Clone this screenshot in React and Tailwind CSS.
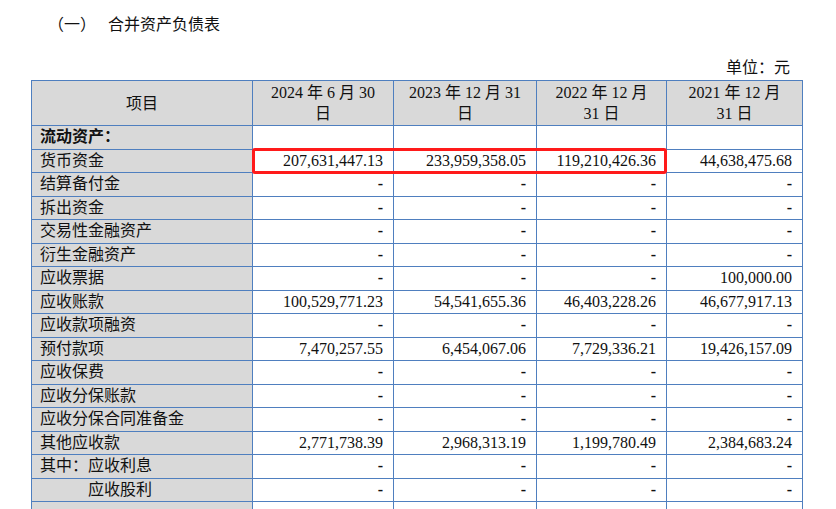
const rows = [
  ["流动资产：", "", "", "", "", true],
  ["货币资金", "207,631,447.13", "233,959,358.05", "119,210,426.36", "44,638,475.68"],
  ["结算备付金", "-", "-", "-", "-"],
  ["拆出资金", "-", "-", "-", "-"],
  ["交易性金融资产", "-", "-", "-", "-"],
  ["衍生金融资产", "-", "-", "-", "-"],
  ["应收票据", "-", "-", "-", "100,000.00"],
  ["应收账款", "100,529,771.23", "54,541,655.36", "46,403,228.26", "46,677,917.13"],
  ["应收款项融资", "-", "-", "-", "-"],
  ["预付款项", "7,470,257.55", "6,454,067.06", "7,729,336.21", "19,426,157.09"],
  ["应收保费", "-", "-", "-", "-"],
  ["应收分保账款", "-", "-", "-", "-"],
  ["应收分保合同准备金", "-", "-", "-", "-"],
  ["其他应收款", "2,771,738.39", "2,968,313.19", "1,199,780.49", "2,384,683.24"],
  ["其中：应收利息", "-", "-", "-", "-"],
  ["　　　应收股利", "-", "-", "-", "-"],
  ["", "", "", "", ""],
];

const font = { fontFamily: '"Liberation Serif", "Noto Sans CJK SC", serif' };

export default function App() {
  return (
    <div className="w-[836px] h-[509px] overflow-hidden bg-white text-[16px] text-[#111]" style={font}>
      <div className="pt-[13px] pl-[48px] h-[56px] text-[16px]">（一）　 合并资产负债表</div>
      <div className="flex justify-end pr-[46px] h-[24px] leading-[24px]">单位：元</div>
      <div className="relative ml-[31px] w-[771px]">
        <table className="border-collapse table-fixed w-[771px]">
          <colgroup>
            <col className="w-[221px]" />
            <col className="w-[141px]" />
            <col className="w-[143px]" />
            <col className="w-[130px]" />
            <col className="w-[136px]" />
          </colgroup>
          <thead>
            <tr className="h-[45px] bg-[#d9d9d9] leading-[21px]">
              <th className="border border-[#4f7fbf] font-normal">项目</th>
              <th className="border border-[#4f7fbf] font-normal">2024 年 6 月 30<br />日</th>
              <th className="border border-[#4f7fbf] font-normal">2023 年 12 月 31<br />日</th>
              <th className="border border-[#4f7fbf] font-normal">2022 年 12 月<br />31 日</th>
              <th className="border border-[#4f7fbf] font-normal">2021 年 12 月<br />31 日</th>
            </tr>
          </thead>
          <tbody>
            {rows.map((r, i) => (
              <tr key={i} className="h-[23.5px] leading-[20px]">
                <td className={`border border-[#4f7fbf] bg-[#d9d9d9] pl-[8px] whitespace-pre ${r[5] ? "font-bold" : ""}`}>{r[0]}</td>
                {r.slice(1, 5).map((v, j) => (
                  <td key={j} className={`border border-[#4f7fbf] text-right pr-[10px] ${v === "-" ? "font-bold" : ""}`}>{v}</td>
                ))}
              </tr>
            ))}
          </tbody>
        </table>
        <div className="absolute left-[221px] top-[68px] w-[415px] h-[26px] border-[3px] border-[#ff1a1a] rounded-[3px]" />
      </div>
    </div>
  );
}
